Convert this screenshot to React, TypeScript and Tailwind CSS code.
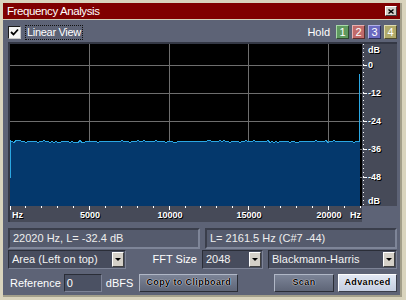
import React from "react";

const KHZ = 15.93;
const ORIGIN = -0.7;

function makeNoise() {
  let s = 12345;
  const rnd = () => {
    s = (s * 16807) % 2147483647;
    return s / 2147483647;
  };
  const pts: [number, number][] = [];
  for (let x = 0; x <= 350; x += 2) {
    const v = rnd();
    const y = v < 0.1 ? 96 : v > 0.86 ? 98 : 97;
    pts.push([x, y]);
  }
  return pts;
}

const noise = makeNoise();

function Spectrum() {
  const top = noise.map(([x, y]) => `${x},${y}`).join(" L");
  const fill = `M0,97 L${top} L350,97 L350,162 L0,162 Z`;
  const line = noise.map(([x, y]) => `${x},${y + 0.5}`).join(" L");
  const vGrid = [79, 159, 238, 318];
  const hGrid = [21, 49, 77, 105, 133];
  return (
    <svg width="352" height="162" viewBox="0 0 352 162" shapeRendering="crispEdges" className="block">
      <rect x="0" y="0" width="352" height="162" fill="#000" />
      {vGrid.map((x) => (
        <line key={x} x1={x + 0.5} y1="0" x2={x + 0.5} y2="162" stroke="#6e6e6e" strokeWidth="1" />
      ))}
      {hGrid.map((y) => (
        <line key={y} x1="0" y1={y + 0.5} x2="352" y2={y + 0.5} stroke="#6e6e6e" strokeWidth="1" />
      ))}
      <path d={fill} fill="#04386c" />
      <path d={`M${line}`} fill="none" stroke="#2ba7e2" strokeWidth="1" />
      <line x1="0.5" y1="97" x2="0.5" y2="134" stroke="#2ba7e2" strokeWidth="1" />
      <line x1="349.5" y1="30" x2="349.5" y2="98" stroke="#2ba7e2" strokeWidth="1" />
    </svg>
  );
}

const axisText =
  "font-['Liberation_Sans',Arial,sans-serif] font-bold text-[9px] leading-[9px] text-white [text-shadow:1px_1px_0_#000]";

function HzAxis() {
  const ticks = Array.from({ length: 23 }, (_, k) => k);
  const labels = [5000, 10000, 15000, 20000];
  return (
    <div className="relative h-[16px] w-[352px] bg-[#464a58]">
      {ticks.map((k) => (
        <span
          key={k}
          className="absolute top-0 w-[1px] bg-white"
          style={{ left: Math.max(0, Math.round(ORIGIN + k * KHZ)), height: k % 5 === 0 ? 4 : 2 }}
        />
      ))}
      <span className={`absolute left-[2px] top-[5px] ${axisText}`}>Hz</span>
      {labels.map((hz) => (
        <span
          key={hz}
          className={`absolute top-[5px] -translate-x-1/2 ${axisText}`}
          style={{ left: Math.round(ORIGIN + (hz / 1000) * KHZ) + 1 }}
        >
          {hz}
        </span>
      ))}
      <span className={`absolute left-[340px] top-[5px] ${axisText}`}>Hz</span>
    </div>
  );
}

function DbAxis() {
  const marks = [
    { y: 21, t: "0" },
    { y: 49, t: "-12" },
    { y: 77, t: "-24" },
    { y: 105, t: "-36" },
    { y: 133, t: "-48" },
  ];
  return (
    <div className="relative h-[162px] w-[35px] bg-[#464a58]">
      <svg width="6" height="162" className="absolute left-0 top-0" shapeRendering="crispEdges">
        <line x1="1.5" y1="0" x2="1.5" y2="162" stroke="#ffffff" strokeWidth="1" strokeDasharray="1 3" />
        {marks.map((m) => (
          <line key={m.y} x1="1" y1={m.y + 0.5} x2="5" y2={m.y + 0.5} stroke="#ffffff" strokeWidth="1" />
        ))}
      </svg>
      <span className={`absolute left-[6px] top-[2px] ${axisText}`}>dB</span>
      {marks.map((m) => (
        <span key={m.t} className={`absolute left-[6px] ${axisText}`} style={{ top: m.y - 4 }}>
          {m.t}
        </span>
      ))}
      <span className={`absolute left-[6px] top-[153px] ${axisText}`}>dB</span>
    </div>
  );
}

function Arrow() {
  return (
    <div className="flex h-[15px] w-[12px] items-center justify-center bg-[#d4d0c8] border border-t-[#ffffff] border-l-[#ffffff] border-r-[#404040] border-b-[#404040]">
      <svg width="6" height="4" viewBox="0 0 6 4">
        <path d="M0 0 H6 L3 3 Z" fill="#000" />
      </svg>
    </div>
  );
}

function Dropdown({ text, w }: { text: string; w: string }) {
  return (
    <div
      className={`${w} flex h-[19px] items-center justify-between bg-[#474c5d] border border-t-[#2a2d37] border-l-[#2a2d37] border-r-[#7d8396] border-b-[#7d8396] pl-[3px] pr-[1px] text-[#f2f2f2]`}
    >
      <span className="leading-[15px]">{text}</span>
      <Arrow />
    </div>
  );
}

const btnText =
  "font-['Liberation_Sans',Arial,sans-serif] font-bold text-[9px] tracking-[0.4px] text-black [text-shadow:0_0_1px_#ffffff,0_0_1px_#ffffff]";

function HoldBtn({ n, bg, lt, dk }: { n: string; bg: string; lt: string; dk: string }) {
  return (
    <div
      className={`flex h-[14px] w-[13px] items-center justify-center border ${bg} ${lt} ${dk} text-[11px] leading-[11px] text-white`}
    >
      {n}
    </div>
  );
}

export default function App() {
  return (
    <div className="h-[300px] w-[406px] bg-[#d9d4bd] pl-[3px] pr-[4px] pt-[3px] pb-[3px] font-['Liberation_Sans',Arial,sans-serif] text-[11px]">
      <div className="flex h-[294px] w-[399px] flex-col border-r-2 border-b-2 border-[#a39f8a]">
        {/* Title bar */}
        <div className="flex h-[16px] items-center justify-between bg-[#800000] pl-[4px] pr-[3px]">
          <span className="text-[11.5px] leading-[14px] tracking-[-0.4px] text-white">Frequency Analysis</span>
          <div className="flex h-[10px] w-[12px] items-center justify-center bg-[#d4d0c8] border border-t-[#ffffff] border-l-[#ffffff] border-r-[#404040] border-b-[#404040]">
            <svg width="6" height="5" viewBox="0 0 6 5">
              <path d="M0.5 0.5 L5.5 4.5 M5.5 0.5 L0.5 4.5" stroke="#000" strokeWidth="1.4" />
            </svg>
          </div>
        </div>
        <div className="h-[1px] bg-[#d4d0b8]" />

        {/* Body */}
        <div className="flex h-[275px] flex-col bg-[#5d6376] pl-[5px] pr-[3px] pt-[4px] pb-[3px]">
          {/* Row 1 */}
          <div className="flex h-[16px] items-center justify-between">
            <div className="flex items-center">
              <div className="flex h-[13px] w-[13px] items-center justify-center bg-[#f4f4f4] border border-t-[#1a1a1a] border-l-[#1a1a1a] border-r-[#c8c8c8] border-b-[#c8c8c8]">
                <svg width="9" height="9" viewBox="0 0 9 9">
                  <path d="M1 4 L3.5 6.5 L8 1.5" stroke="#000" strokeWidth="1.8" fill="none" />
                </svg>
              </div>
              <span className="ml-[4px] border border-dotted border-[#111] px-[1px] leading-[13px] tracking-[-0.3px] text-white">
                Linear View
              </span>
            </div>
            <div className="flex items-center">
              <span className="mr-[6px] text-white">Hold</span>
              <div className="flex gap-[3px]">
                <HoldBtn n="1" bg="bg-[#5f9a5f]" lt="border-t-[#a8d8a8] border-l-[#a8d8a8]" dk="border-r-[#2e4a2e] border-b-[#2e4a2e]" />
                <HoldBtn n="2" bg="bg-[#c06a6a]" lt="border-t-[#e8b0b0] border-l-[#e8b0b0]" dk="border-r-[#5a2e2e] border-b-[#5a2e2e]" />
                <HoldBtn n="3" bg="bg-[#6a6ac0]" lt="border-t-[#b0b0e8] border-l-[#b0b0e8]" dk="border-r-[#2e2e5a] border-b-[#2e2e5a]" />
                <HoldBtn n="4" bg="bg-[#b0aa6a]" lt="border-t-[#e0dcb0] border-l-[#e0dcb0]" dk="border-r-[#4e4a2e] border-b-[#4e4a2e]" />
              </div>
            </div>
          </div>

          {/* Graph */}
          <div className="mt-[2px] flex h-[180px] w-[389px] border-l-2 border-t-2 border-[#343845]">
            <div className="flex flex-col">
              <Spectrum />
              <HzAxis />
            </div>
            <div className="flex flex-col">
              <DbAxis />
            </div>
          </div>

          {/* Status */}
          <div className="mt-[6px] grid h-[20px] grid-cols-2 gap-[5px]">
            <div className="flex items-center bg-[#555b6d] border-2 border-t-[#3a3e4b] border-l-[#3a3e4b] border-r-[#7e8598] border-b-[#7e8598] pl-[3px] text-[#eeeeee]">
              22020 Hz, L= -32.4 dB
            </div>
            <div className="flex items-center bg-[#555b6d] border-2 border-t-[#3a3e4b] border-l-[#3a3e4b] border-r-[#7e8598] border-b-[#7e8598] pl-[3px] text-[#eeeeee]">
              L= 2161.5 Hz (C#7 -44)
            </div>
          </div>

          {/* Dropdown row */}
          <div className="mt-[2px] flex h-[19px] items-center">
            <Dropdown text="Area (Left on top)" w="w-[118px]" />
            <div className="flex-1" />
            <span className="text-white">FFT Size</span>
            <div className="ml-[5px]">
              <Dropdown text="2048" w="w-[61px]" />
            </div>
            <div className="ml-[5px]">
              <Dropdown text="Blackmann-Harris" w="w-[129px]" />
            </div>
          </div>

          {/* Bottom row */}
          <div className="mt-[5px] flex h-[18px] items-center">
            <span className="ml-[2px] text-white">Reference</span>
            <div className="ml-[3px] flex h-[18px] w-[38px] items-center bg-[#4b5163] border border-t-[#2a2d37] border-l-[#2a2d37] border-r-[#7d8396] border-b-[#7d8396] pl-[2px] text-white">
              0
            </div>
            <span className="ml-[4px] text-white">dBFS</span>
            <button className="ml-[6px] flex h-[18px] w-[99px] items-center justify-center bg-gradient-to-b from-[#7c8497] to-[#5e6577] border border-t-[#b0b7c6] border-l-[#b0b7c6] border-r-[#2a2d36] border-b-[#2a2d36]">
              <span className={btnText}>Copy to Clipboard</span>
            </button>
            <div className="flex-1" />
            <button className="flex h-[18px] w-[60px] items-center justify-center bg-gradient-to-b from-[#7c8497] to-[#5e6577] border border-t-[#b0b7c6] border-l-[#b0b7c6] border-r-[#2a2d36] border-b-[#2a2d36]">
              <span className={btnText}>Scan</span>
            </button>
            <button className="ml-[4px] flex h-[18px] w-[59px] items-center justify-center bg-gradient-to-b from-[#e2e8f4] to-[#c3cde0] border border-t-[#ffffff] border-l-[#ffffff] border-r-[#3a3e4a] border-b-[#3a3e4a]">
              <span className={btnText}>Advanced</span>
            </button>
          </div>
        </div>
      </div>
    </div>
  );
}
